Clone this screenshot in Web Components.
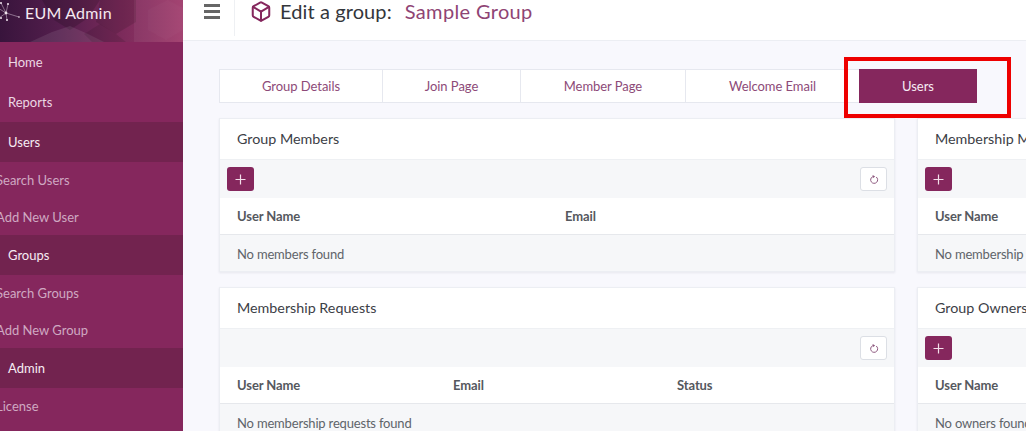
<!DOCTYPE html>
<html>
<head>
<meta charset="utf-8">
<title>EUM Admin</title>
<style>
  html, body { margin: 0; height: 100%; overflow: hidden; }
  body { font-family: "Lato", "Open Sans", sans-serif; font-size: 13px; background: #f8f8fd; }
</style>
</head>
<body>
<eum-app>
  <eum-sidebar slot="side">
    <eum-nav>Home</eum-nav>
    <eum-nav>Reports</eum-nav>
    <eum-nav type="head">Users</eum-nav>
    <eum-nav type="sub">Search Users</eum-nav>
    <eum-nav type="sub">Add New User</eum-nav>
    <eum-nav type="head">Groups</eum-nav>
    <eum-nav type="sub">Search Groups</eum-nav>
    <eum-nav type="sub">Add New Group</eum-nav>
    <eum-nav type="head">Admin</eum-nav>
    <eum-nav type="sub">License</eum-nav>
  </eum-sidebar>
  <eum-topbar slot="top" label="Edit a group:" name="Sample Group"></eum-topbar>
  <eum-tabs>
    <eum-tab style="width:163px">Group Details</eum-tab>
    <eum-tab style="width:138px">Join Page</eum-tab>
    <eum-tab style="width:165px">Member Page</eum-tab>
    <eum-tab style="width:173px">Welcome Email</eum-tab>
    <eum-tab slot="active">Users</eum-tab>
  </eum-tabs>
  <eum-grid>
    <eum-card add refresh cols="328px 1fr">
      <span slot="title">Group Members</span>
      <span slot="head">User Name</span>
      <span slot="head">Email</span>
      <span slot="empty">No members found</span>
    </eum-card>
    <eum-card add refresh cols="328px 1fr">
      <span slot="title">Membership Managers</span>
      <span slot="head">User Name</span>
      <span slot="head">Email</span>
      <span slot="empty">No membership managers found</span>
    </eum-card>
    <eum-card refresh cols="216px 224px 1fr">
      <span slot="title">Membership Requests</span>
      <span slot="head">User Name</span>
      <span slot="head">Email</span>
      <span slot="head">Status</span>
      <span slot="empty">No membership requests found</span>
    </eum-card>
    <eum-card add refresh cols="328px 1fr">
      <span slot="title">Group Owners</span>
      <span slot="head">User Name</span>
      <span slot="head">Email</span>
      <span slot="empty">No owners found</span>
    </eum-card>
  </eum-grid>
</eum-app>

<script>
// small helper so every element is set up the same way
function shadow(el, html) {
  el.attachShadow({ mode: 'open' }).innerHTML = html;
}

class EumApp extends HTMLElement {
  connectedCallback() {
    shadow(this, `
      <style>
        :host { display: flex; width: 1026px; height: 431px; overflow: hidden; }
        .right { flex: 1; min-width: 0; display: flex; flex-direction: column; }
        .main { flex: 1; padding: 28px 0 0 36px; overflow: hidden; }
      </style>
      <slot name="side"></slot>
      <div class="right">
        <slot name="top"></slot>
        <div class="main"><slot></slot></div>
      </div>`);
  }
}

class EumSidebar extends HTMLElement {
  connectedCallback() {
    shadow(this, `
      <style>
        :host { display: block; width: 183px; flex: none; background: #85275d; }
        .brand { position: relative; height: 42px; overflow: hidden; display: flex; align-items: flex-start; padding: 3px 0 0 25px; box-sizing: border-box; }
        .brand svg { position: absolute; left: 0; top: 0; }
        .brand span { position: relative; color: #f5e9f1; font-size: 16px; line-height: 20px; letter-spacing: .2px; }
      </style>
      <div class="brand">
        <svg width="183" height="42" viewBox="0 0 183 42">
          <defs>
            <linearGradient id="g" x1="0" y1="0" x2="1" y2="0">
              <stop offset="0" stop-color="#38143c"/>
              <stop offset=".35" stop-color="#561f4e"/>
              <stop offset=".65" stop-color="#7a2a5a"/>
              <stop offset="1" stop-color="#9f3a6b"/>
            </linearGradient>
          </defs>
          <rect width="183" height="42" fill="url(#g)"/>
          <polygon points="42,0 100,0 88,18 70,30 54,20" fill="#000" opacity=".16"/>
          <polygon points="100,0 136,0 136,22 116,34 96,22" fill="#000" opacity=".12"/>
          <polygon points="134,0 183,0 183,42 134,42" fill="#fff" opacity=".05"/>
          <polygon points="148,10 168,0 183,8 183,30 166,40 148,30" fill="#fff" opacity=".025"/>
          <polygon points="30,42 52,32 70,26 88,34 104,42" fill="#fff" opacity=".09"/>
          <polygon points="84,34 100,24 116,34 126,42 92,42" fill="#000" opacity=".1"/>
          <g stroke="#d9c6d8" stroke-width=".6" opacity=".85">
            <path d="M6 13 L1 3 M6 13 L-2 8 M6 13 L-1 18 M6 13 L7 20 M6 13 L19 17 M6 13 L8 4"/>
          </g>
          <g fill="#efe4ee">
            <circle cx="6" cy="13" r="1.4"/><circle cx="1" cy="3" r="1"/><circle cx="8" cy="4" r="1"/>
            <circle cx="1" cy="18" r="1"/><circle cx="7" cy="20" r="1"/><circle cx="19" cy="17" r=".8"/>
          </g>
        </svg>
        <span>EUM Admin</span>
      </div>
      <slot></slot>`);
  }
}

class EumNav extends HTMLElement {
  connectedCallback() {
    shadow(this, `
      <style>
        :host { display: flex; align-items: center; height: 40px; padding-left: 8px; box-sizing: border-box; color: #ecd7e4; }
        :host([type="head"]) { background: #72234f; color: #f6ecf3; }
        :host([type="sub"]) { height: 36.5px; padding-left: 0; color: #cfa9c2; }
        :host([type="sub"]) span { margin-left: -4px; }
      </style>
      <span><slot></slot></span>`);
  }
}

class EumTopbar extends HTMLElement {
  connectedCallback() {
    const label = this.getAttribute('label');
    const name = this.getAttribute('name');
    shadow(this, `
      <style>
        :host { display: flex; height: 40px; background: #fff; border-bottom: 1px solid #eceef3; box-sizing: content-box; }
        .menu { width: 52px; height: 36px; box-sizing: border-box; border-right: 1px solid #eef0f3; padding: 4px 0 0 21px; }
        .menu i { display: block; width: 16px; height: 3px; margin-bottom: 3px; background: #666; }
        .title { display: flex; align-items: flex-start; gap: 8px; padding: 0 0 0 15px; font-size: 20px; line-height: 22px; letter-spacing: .1px; color: #33363b; }
        .title svg { flex: none; }
        .name { margin-left: 5px; letter-spacing: .35px; color: #8f4474; }
      </style>
      <div class="menu"><i></i><i></i><i></i></div>
      <div class="title">
        <svg width="22" height="23" viewBox="0 0 24 24" fill="none" stroke="#85275d" stroke-width="2.2" stroke-linecap="round" stroke-linejoin="round">
          <path d="M21 16V8a2 2 0 0 0-1-1.73l-7-4a2 2 0 0 0-2 0l-7 4A2 2 0 0 0 3 8v8a2 2 0 0 0 1 1.73l7 4a2 2 0 0 0 2 0l7-4A2 2 0 0 0 21 16z"/>
          <polyline points="3.27 6.96 12 12.01 20.73 6.96"/>
          <line x1="12" y1="22.08" x2="12" y2="12"/>
        </svg>
        <span>${label}</span><span class="name">${name}</span>
      </div>`);
  }
}

class EumTabs extends HTMLElement {
  connectedCallback() {
    shadow(this, `
      <style>
        :host { display: flex; position: relative; height: 34px; margin-bottom: 15px; }
        .bar { display: flex; background: #fff; border: 1px solid #e6e8ef; border-right: 0; box-sizing: border-box; height: 34px; }
        .active { width: 118px; }
        /* red annotation drawn on top of the screenshot */
        .mark { position: absolute; left: 625px; top: -12px; width: 167px; height: 61px; box-sizing: border-box; border: 4px solid #ee0000; pointer-events: none; }
      </style>
      <div class="bar"><slot></slot></div>
      <div class="active"><slot name="active"></slot></div>
      <div class="mark"></div>`);
  }
}

class EumTab extends HTMLElement {
  connectedCallback() {
    shadow(this, `
      <style>
        :host { display: flex; align-items: center; justify-content: center; box-sizing: border-box; height: 100%; color: #8d4a78; border-right: 1px solid #e6e8ef; letter-spacing: -.05px; }
        :host([slot="active"]) { height: 34px; background: #85275d; color: #f7edf4; border: 0; }
      </style>
      <slot></slot>`);
    if (this.textContent === 'Welcome Email') this.style.borderRight = '0';
  }
}

class EumGrid extends HTMLElement {
  connectedCallback() {
    shadow(this, `
      <style>
        :host { display: grid; grid-template-columns: 676px 676px; column-gap: 22px; row-gap: 15px; width: 1374px; }
      </style>
      <slot></slot>`);
  }
}

class EumCard extends HTMLElement {
  connectedCallback() {
    const cols = this.getAttribute('cols') || '1fr';
    const add = this.hasAttribute('add') ? `<button class="add"><svg width="11" height="11" viewBox="0 0 11 11" stroke="#f3dfea" stroke-width="1.2"><path d="M5.5 .5v10M.5 5.5h10"/></svg></button>` : '';
    const refresh = this.hasAttribute('refresh') ? `<button class="refresh"><svg width="10" height="11" viewBox="0 0 10 11" fill="none" stroke="#8f5a80" stroke-width="1"><path d="M3.6 2.7A3.5 3.5 0 1 0 7.2 3"/><path d="M3.6 .9 6.2 2.6 3.8 4.2z" fill="#8f5a80" stroke="none"/></svg></button>` : '';
    shadow(this, `
      <style>
        :host { display: block; box-sizing: border-box; background: #fff; border: 1px solid #eceef3; box-shadow: 0 1px 2px rgba(40,40,70,.08); overflow: hidden; }
        .title { height: 41px; padding: 0 0 2px 17px; display: flex; align-items: center; font-size: 14.3px; color: #3c4046; border-bottom: 1px solid #eef0f3; box-sizing: border-box; }
        .tools { height: 38px; background: #f6f7f9; display: flex; align-items: center; padding: 0 7px 0 6.5px; box-sizing: border-box; }
        button { width: 27px; height: 24px; padding: 0; border-radius: 3px; display: flex; align-items: center; justify-content: center; }
        .add { background: #85275d; border: 0; }
        .refresh { margin-left: auto; background: #fff; border: 1px solid #dcdfe5; }
        .head { height: 37px; display: grid; grid-template-columns: ${cols}; align-items: center; padding-left: 17px; font-weight: 700; letter-spacing: -.1px; color: #55585e; border-bottom: 1px solid #e6e8ec; box-sizing: border-box; }
        .empty { height: 36px; display: flex; align-items: center; padding: 1px 0 0 17px; box-sizing: border-box; background: #f6f7f9; color: #60646a; letter-spacing: -.18px; }
      </style>
      <div class="title"><slot name="title"></slot></div>
      <div class="tools">${add}${refresh}</div>
      <div class="head"><slot name="head"></slot></div>
      <div class="empty"><slot name="empty"></slot></div>`);
  }
}

customElements.define('eum-app', EumApp);
customElements.define('eum-sidebar', EumSidebar);
customElements.define('eum-nav', EumNav);
customElements.define('eum-topbar', EumTopbar);
customElements.define('eum-tabs', EumTabs);
customElements.define('eum-tab', EumTab);
customElements.define('eum-grid', EumGrid);
customElements.define('eum-card', EumCard);
</script>
</body>
</html>
